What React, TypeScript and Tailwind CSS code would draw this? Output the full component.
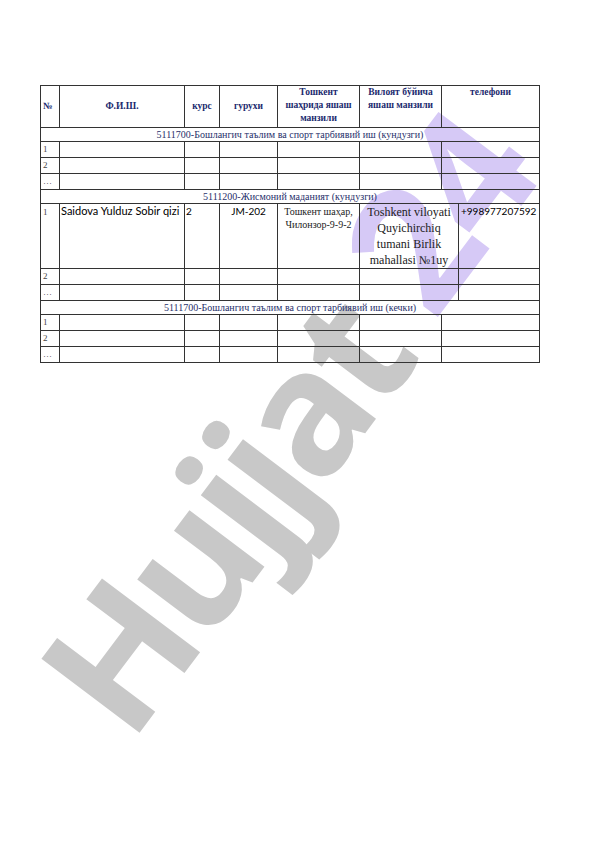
import React from "react";

const serif = { fontFamily: '"Liberation Serif", "Times New Roman", serif' };
const sans = { fontFamily: '"Lato", "Open Sans", sans-serif' };

function Num({ n }: { n: string }) {
  return (
    <td className="border border-[#333] px-[2px] align-top pt-[1px] text-[9px] leading-[12px] text-[#444]">
      {n}
    </td>
  );
}

function EmptyRowA({ n }: { n: string }) {
  return (
    <tr className="h-[16px]">
      <Num n={n} />
      <td className="border border-[#333]" />
      <td className="border border-[#333]" />
      <td className="border border-[#333]" />
      <td className="border border-[#333]" />
      <td className="border border-[#333]" />
      <td className="border border-[#333]" colSpan={2} />
    </tr>
  );
}

function EmptyRowB({ n }: { n: string }) {
  return (
    <tr className="h-[16px]">
      <Num n={n} />
      <td className="border border-[#333]" />
      <td className="border border-[#333]" />
      <td className="border border-[#333]" />
      <td className="border border-[#333]" />
      <td className="border border-[#333]" colSpan={2} />
      <td className="border border-[#333]" />
    </tr>
  );
}

function Section({ text }: { text: string }) {
  return (
    <tr className="h-[14px]">
      <td colSpan={8} className="border border-[#333] text-center text-[10px] leading-[12px] text-[#27306b]">
        {text}
      </td>
    </tr>
  );
}

export default function App() {
  return (
    <div className="relative w-[596px] h-[842px] bg-white overflow-hidden" style={serif}>
      <div
        className="absolute left-[8px] top-[653px] origin-top-left -rotate-[53deg] whitespace-nowrap leading-none font-bold text-[172px] tracking-[-8px]"
        style={{ fontFamily: '"Open Sans", sans-serif' }}
      >
        <span className="text-[#c8c8c8]">Hujjat</span>
        <span className="relative -top-[12px] ml-[40px] text-[#d6c9f6]">24</span>
      </div>

      <div className="relative pt-[85px] pl-[40px]">
        <table className="table-fixed border-collapse w-[499px] border border-[#555]">
          <colgroup>
            <col className="w-[19px]" />
            <col className="w-[125px]" />
            <col className="w-[35px]" />
            <col className="w-[58px]" />
            <col className="w-[82px]" />
            <col className="w-[82px]" />
            <col className="w-[17px]" />
            <col className="w-[81px]" />
          </colgroup>
          <tbody>
            <tr className="h-[42px] text-[9.5px] font-bold text-[#1b2a6e] leading-[13px]">
              <td className="border border-[#333] px-[2px] align-middle">№</td>
              <td className="border border-[#333] text-center align-middle">Ф.И.Ш.</td>
              <td className="border border-[#333] text-center align-middle">курс</td>
              <td className="border border-[#333] text-center align-middle">гурухи</td>
              <td className="border border-[#333] text-center align-top whitespace-nowrap">
                Тошкент
                <br />
                шаҳрида яшаш
                <br />
                манзили
              </td>
              <td className="border border-[#333] text-center align-top whitespace-nowrap">
                Вилоят бўйича
                <br />
                яшаш манзили
              </td>
              <td className="border border-[#333] text-center align-top" colSpan={2}>
                телефони
              </td>
            </tr>
            <Section text="5111700-Бошлангич таълим ва спорт тарбиявий иш (кундузги)" />
            <EmptyRowA n="1" />
            <EmptyRowA n="2" />
            <EmptyRowA n="…" />
            <Section text="5111200-Жисмоний маданият (кундузги)" />
            <tr className="h-[65px]">
              <td className="border border-[#333] px-[2px] align-top pt-[2px] text-[9px] leading-[12px] text-[#444]">1</td>
              <td
                className="border border-[#333] align-top px-[1px] text-[11px] leading-[14px] text-black whitespace-nowrap"
                style={sans}
              >
                Saidova Yulduz Sobir qizi
              </td>
              <td className="border border-[#333] align-top px-[1px] text-[10px] leading-[14px] text-black" style={sans}>
                2
              </td>
              <td className="border border-[#333] align-top text-center text-[10px] leading-[14px] text-black" style={sans}>
                JM-202
              </td>
              <td className="border border-[#333] align-top text-center text-[10px] leading-[13px] text-[#222] pt-[1px] whitespace-nowrap">
                Тошкент шаҳар,
                <br />
                Чилонзор-9-9-2
              </td>
              <td className="border border-[#333] align-top text-center text-[12px] leading-[16px] text-[#222]" colSpan={2}>
                Toshkent viloyati Quyichirchiq tumani Birlik mahallasi №1uy
              </td>
              <td className="border border-[#333] align-top px-[2px] text-[10px] leading-[14px] text-black whitespace-nowrap" style={sans}>
                +998977207592
              </td>
            </tr>
            <EmptyRowB n="2" />
            <EmptyRowB n="…" />
            <Section text="5111700-Бошлангич таълим ва спорт тарбиявий иш (кечки)" />
            <EmptyRowA n="1" />
            <EmptyRowA n="2" />
            <EmptyRowA n="…" />
          </tbody>
        </table>
      </div>
    </div>
  );
}
